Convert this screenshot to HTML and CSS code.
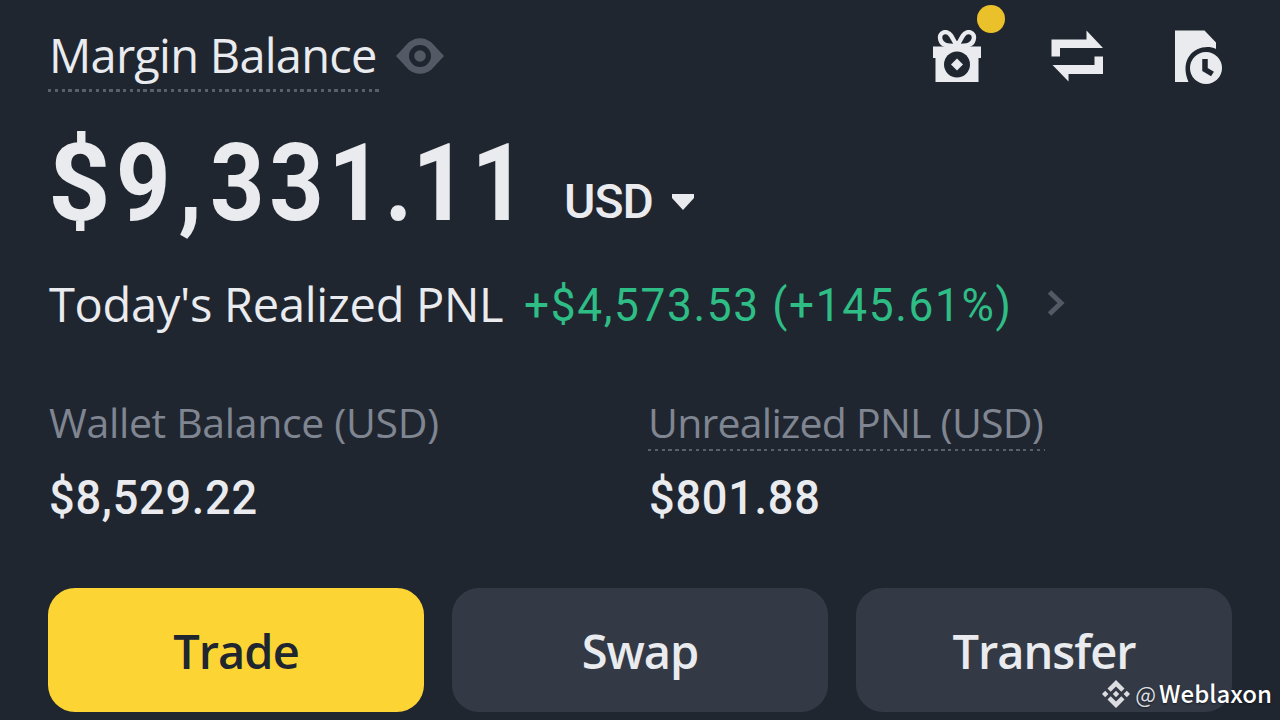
FILE: index.html
```html
<!DOCTYPE html>
<html lang="en">
<head>
    <meta charset="UTF-8">
    <meta name="viewport" content="width=device-width, initial-scale=1.0">
    <title>Margin Balance</title>
    <link rel="stylesheet" href="styles.css">
</head>
<body>
    <div class="wallet">
        <div class="header">
            <div class="title dotted">Margin Balance</div>
            <svg class="eye" width="48" height="38" viewBox="0 0 50 38">
                <path fill="#535965" fill-rule="evenodd" d="M0 19 L13 5 Q25 -4 37 5 L50 19 L37 33 Q25 42 13 33 Z M25 7.500a11.500 11.500 0 1 0 0 23a11.500 11.500 0 1 0 0-23z"/>
                <circle cx="25" cy="19" r="6" fill="#535965"/>
            </svg>

            <div class="actions">
                <div class="gift">
                    <svg width="50" height="54" viewBox="0 0 50 54">
                        <path fill="none" stroke="#eaebef" stroke-width="4.500" d="M25 16 L19 5.500 C15 -0.500 6 2 8.500 10 C10 15 14 16 25 16 L31 5.500 C35 -0.500 44 2 41.500 10 C40 15 36 16 25 16"/>
                        <path fill="#eaebef" d="M1 16.500H49V28H46.500V52H3.500V28H1Z"/>
                        <circle cx="25" cy="34.500" r="13" fill="#202630"/>
                        <path fill="#eaebef" d="M25 28.500l6 6-6 6-6-6z"/>
                    </svg>
                    <span class="badge"></span>
                </div>
                <svg width="54" height="54" viewBox="0 0 54 54">
                    <path fill="#eaebef" d="M0.500 9.500H35.500V0.500L52 18H9V26.500H0.500ZM52 26.500V44H17.500V51.500L1.500 35H43.500V26.500Z"/>
                </svg>
                <svg width="50" height="56" viewBox="0 0 50 56">
                    <path fill="#eaebef" d="M1 0.500H30.500L42 12.500V19C28 12 3 24 14.500 52H1Z"/>
                    <circle cx="32" cy="38" r="16" fill="#eaebef"/>
                    <path fill="none" stroke="#202630" stroke-width="5.500" d="M31 29V39.500L38.500 44"/>
                </svg>
            </div>
        </div>

        <div class="total">
            <div class="amount"><div class="digits"><span class="sign">$</span>9<span class="comma">,</span>331<span class="point">.</span>11</div></div>
            <div class="currency">USD</div>
            <svg class="caret" width="24" height="18" viewBox="0 0 24 18">
                <path fill="#eaebef" d="M1 1H23V5L12 17L1 5Z"/>
            </svg>
        </div>

        <div class="pnl">
            <div class="pnl-label">Today's Realized PNL</div>
            <div class="pnl-value"><div class="digits">+$4,573.53 (+145.61%)</div></div>
            <svg class="chevron" width="18" height="28" viewBox="0 0 18 28">
                <path fill="none" stroke="#535965" stroke-width="5" d="M2.500 3L14 14L2.500 25"/>
            </svg>
        </div>

        <div class="stats">
            <div class="stat">
                <div class="stat-label">Wallet Balance (USD)</div>
                <div class="stat-value"><div class="digits">$8,529.22</div></div>
            </div>
            <div class="stat">
                <div class="stat-label unrealized dotted">Unrealized PNL (USD)</div>
                <div class="stat-value"><div class="digits">$801.88</div></div>
            </div>
        </div>

        <div class="buttons">
            <button class="btn btn-trade">Trade</button>
            <button class="btn">Swap</button>
            <button class="btn">Transfer</button>
        </div>

        <div class="watermark">
            <svg width="28" height="28" viewBox="0 0 28 28">
                <path fill="#dcdde0" d="M14 0L22.500 8.500L19.300 11.700L14 6.400L8.700 11.700L5.500 8.500ZM14 28L5.500 19.500L8.700 16.300L14 21.600L19.300 16.300L22.500 19.500ZM3.200 10.800L6.400 14L3.200 17.200L0 14ZM24.800 10.800L28 14L24.800 17.200L21.600 14ZM14 10.800L17.200 14L14 17.200L10.800 14Z"/>
            </svg>
            <span class="at">@</span><span class="author">Weblaxon</span>
        </div>
    </div>
</body>
</html>
```
FILE: styles.css
```css
* {
    box-sizing: border-box;
}

body {
    margin: 0;
    background: #202630;
    color: #eaebef;
    font-family: 'Open Sans', 'Noto Sans', sans-serif;
    overflow: hidden;
}

.wallet {
    position: relative;
    width: 1280px;
    height: 720px;
    padding: 0 48px;
    white-space: nowrap;
}

.header {
    display: flex;
    align-items: flex-start;
    height: 112px;
}

.title {
    width: 331px;
    height: 92px;
    padding: 23px 0 0 1px;
    font-size: 47px;
    line-height: 65px;
    letter-spacing: -0.75px;
}

.dotted {
    background-image: repeating-linear-gradient(90deg, #59606b 0, #59606b 3.4px, transparent 3.4px, transparent 6.82px);
    background-repeat: no-repeat;
    background-size: 100% 3px;
    background-position: 0 100%;
}

.eye {
    margin: 37px 0 0 17px;
}

.actions {
    display: flex;
    gap: 69px;
    margin: 30px 0 0 auto;
    padding-right: 8px;
}

.gift {
    position: relative;
}

.badge {
    position: absolute;
    top: -25px;
    right: -23px;
    width: 28px;
    height: 28px;
    border-radius: 50%;
    background: #ebc12b;
}

/* condensed numerals */
.digits {
    width: max-content;
    font-family: Roboto, sans-serif;
    transform: scaleX(0.94);
    transform-origin: 0 0;
}

.total {
    display: flex;
    height: 150px;
}

.amount {
    width: 516px;
    font-size: 108px;
    font-weight: 700;
    line-height: 142px;
    letter-spacing: 5.2px;
}

.amount .digits {
    transform: scaleX(0.88);
}

.sign {
    display: inline-block;
    margin-right: 10px;
    transform: scaleX(1.15);
    transform-origin: 0 0;
}

.comma {
    margin: 0 4px;
}

.point {
    margin: 0 -5px 0 -3px;
}

.currency {
    font-family: Roboto, sans-serif;
    font-size: 48px;
    font-weight: 500;
    line-height: 180px;
    letter-spacing: -1px;
}

.caret {
    margin: 81px 0 0 18px;
}

.pnl {
    display: flex;
    height: 132px;
}

.pnl-label {
    width: 476px;
    padding-left: 1px;
    font-size: 47px;
    line-height: 84px;
    letter-spacing: -0.3px;
}

.pnl-value {
    width: 523px;
    font-size: 47px;
    line-height: 86px;
    letter-spacing: 1.75px;
    color: #2ebd85;
}

.chevron {
    margin-top: 27px;
}

.stats {
    display: grid;
    grid-template-columns: 600px 1fr;
    height: 194px;
}

.stat-label {
    height: 57px;
    padding-left: 1px;
    font-size: 41px;
    line-height: 56px;
    letter-spacing: -0.35px;
    color: #7f8591;
}

.unrealized {
    width: 397px;
    padding-left: 0;
    letter-spacing: -0.75px;
}

.unrealized.dotted {
    background-size: 100% 2px;
}

.stat-value {
    padding-left: 1px;
    font-size: 48px;
    font-weight: 500;
    line-height: 93px;
    letter-spacing: 0.8px;
}

.buttons {
    display: grid;
    grid-template-columns: repeat(3, 1fr);
    gap: 28px;
}

.btn {
    height: 124px;
    padding: 2px 0 0;
    border: none;
    border-radius: 27px;
    background: #333a46;
    color: #eaebef;
    font-family: 'Open Sans', 'Noto Sans', sans-serif;
    font-size: 47px;
    font-weight: 600;
    letter-spacing: -1px;
}

.btn-trade {
    background: #fcd535;
    color: #202630;
}

.watermark {
    position: absolute;
    right: 8px;
    bottom: 8px;
    display: flex;
    align-items: center;
    height: 36px;
    font-family: 'Noto Sans CJK SC', sans-serif;
    font-size: 24px;
    line-height: 32px;
    color: #fff;
    text-shadow: 0 1px 2px rgba(0,0,0,0.5);
}

.at {
    margin: -3px 0 0 5px;
    font-size: 22px;
    color: #dcdde0;
}

.author {
    margin: -3px 0 0 3px;
    font-weight: 500;
}
```
